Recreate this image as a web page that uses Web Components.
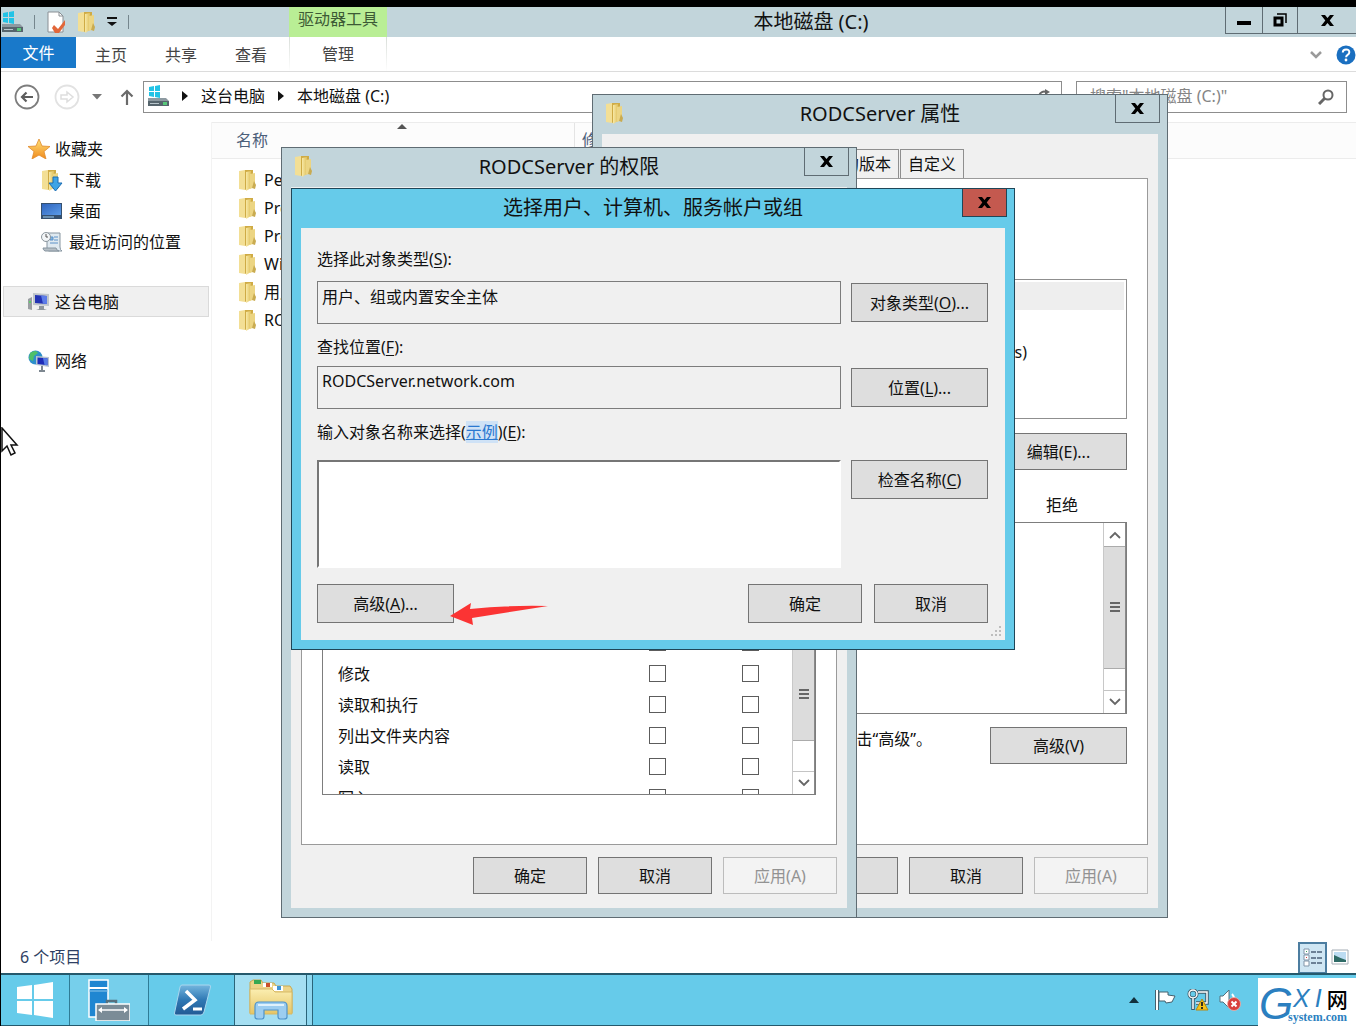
<!DOCTYPE html>
<html lang="zh-CN">
<head>
<meta charset="utf-8">
<title>本地磁盘 (C:)</title>
<style>
  html, body { margin: 0; }
  body {
    background: #000;
    font: 16px/24px "Noto Sans", "Open Sans", "Noto Sans CJK SC", sans-serif;
    color: #111;
    overflow: hidden;
  }
  server-desktop { min-height: 100vh; }
  properties-dialog { left: 592px; top: 94px; width: 576px; }
  permissions-dialog { left: 281px; top: 147px; width: 576px; }
  select-dialog { left: 291px; top: 188px; width: 724px; }
</style>
</head>
<body>
<server-desktop>
  <explorer-window></explorer-window>
  <task-bar slot="bar"></task-bar>
  <properties-dialog slot="windows"></properties-dialog>
  <permissions-dialog slot="windows"></permissions-dialog>
  <select-dialog slot="windows"></select-dialog>
  <mouse-pointer slot="windows"></mouse-pointer>
  <site-mark slot="windows"></site-mark>
</server-desktop>

<script>
const svg = (w, h, body, vb) => `<svg width="${w}" height="${h}" viewBox="${vb || `0 0 ${w} ${h}`}" aria-hidden="true">${body}</svg>`;

const FOLDER = `
  <defs><linearGradient id="f" x1="0" x2="1"><stop offset="0" stop-color="#f8e9a6"/><stop offset="1" stop-color="#dfc05c"/></linearGradient></defs>
  <path d="M1 2l6-1v20l-6-1z" fill="#f3df95"/>
  <path d="M7 1h8v16l-8 4z" fill="#cfab45"/>
  <path d="M8 3l5-1v17l-5 3z" fill="url(#f)"/>
  <path d="M12 5l5-1v14l-5 2z" fill="#ecd583"/>
  <path d="M16 12l2 4-1 4-3-1z" fill="#c9ab50"/>`;
const DRIVE = `
  <g fill="#22c3e6"><path d="M2 2l5-1v5H2zM8 1l5-1v6H8zM2 7h5v5l-5-1zM8 7h5v6l-5-1z"/></g>
  <path d="M1 13h18l3 3v5H1z" fill="#8d9aa1"/><path d="M1 16h21v5H1z" fill="#56656d"/>
  <path d="M3 18h9v1H3z" fill="#b9c6cc"/><path d="M16 17h4v3h-4z" fill="#57c879"/>`;
const ICONS = {
  folder: svg(19, 22, FOLDER),
  drive: svg(22, 22, DRIVE),
  page: svg(20, 22, `<path d="M2 1h11l4 4v16H2z" fill="#fff" stroke="#8a8f94"/><path d="M13 1v4h4" fill="none" stroke="#8a8f94"/><path d="M8 14l4 4 7-9v5l-6 8H9l-3-5z" fill="#e2673a"/>`),
  qat: svg(10, 10, `<path d="M0 1h10" stroke="#111" stroke-width="2"/><path d="M0 5h10l-5 4z" fill="#111"/>`),
  min: svg(14, 14, `<path d="M0 8h14v4H0z" fill="#000"/>`),
  restore: svg(14, 14, `<path d="M4 1h9v9" fill="none" stroke="#000" stroke-width="1.500"/><path d="M2 5h7v7H2z" fill="none" stroke="#000" stroke-width="3"/>`),
  close: svg(13, 11, `<path d="M0 0h4l2.500 3L9 0h4L8.700 5.500 13 11H9L6.500 8 4 11H0l4.300-5.500z" fill="#000"/>`),
  help: svg(20, 20, `<circle cx="10" cy="10" r="9.500" fill="#1a6fc0"/><path d="M6.800 7.600q0-3.200 3.300-3.200t3.200 2.900q0 1.600-1.700 2.600-1.500.900-1.500 2.300" fill="none" stroke="#fff" stroke-width="2"/><circle cx="10" cy="15" r="1.400" fill="#fff"/>`),
  chevron: svg(12, 8, `<path d="M1 1l5 5 5-5" fill="none" stroke="#9a9a9a" stroke-width="2.500"/>`),
  back: svg(26, 26, `<circle cx="13" cy="13" r="11.500" fill="none" stroke="#7d7d7d" stroke-width="1.800"/><path d="M19 13H8M12.500 8.500L8 13l4.500 4.500" fill="none" stroke="#5d5d5d" stroke-width="2.200"/>`),
  forward: svg(26, 26, `<circle cx="13" cy="13" r="11.500" fill="none" stroke="#e2e2e2" stroke-width="1.800"/><path d="M7 11h6V8l6 5-6 5v-3H7z" fill="none" stroke="#dedede" stroke-width="1.500"/>`),
  caret: svg(10, 6, `<path d="M0 0h10L5 5.500z" fill="#777"/>`),
  up: svg(14, 16, `<path d="M7 16V2M1.500 7.500L7 2l5.500 5.500" fill="none" stroke="#6a6a6a" stroke-width="2.200"/>`),
  crumb: svg(6, 10, `<path d="M0 0l6 5-6 5z" fill="#111"/>`),
  refresh: svg(14, 14, `<path d="M12 8a5 5 0 1 1-3-5" fill="none" stroke="#666" stroke-width="2"/><path d="M8 0l5 3-5 3z" fill="#666"/>`),
  search: svg(16, 16, `<circle cx="10" cy="6" r="4.500" fill="none" stroke="#666" stroke-width="2"/><path d="M7 9l-6 6" stroke="#666" stroke-width="3"/>`),
  star: svg(22, 20, `<defs><linearGradient id="s" x2="0" y2="1"><stop stop-color="#ffe27a"/><stop offset="1" stop-color="#f08a1c"/></linearGradient></defs><path d="M11 0l3 7 8 .500-6 5 2 7.500-7-4-7 4 2-7.500-6-5L8 7z" fill="url(#s)" stroke="#e08a2c" stroke-width=".800"/>`),
  download: svg(22, 22, FOLDER + `<path d="M12 8h5v6h4l-6.500 8L8 14h4z" fill="#3ea4e6" stroke="#1b6db3"/>`),
  desk: svg(22, 18, `<defs><linearGradient id="d" x2="1" y2="1"><stop stop-color="#2f64bd"/><stop offset="1" stop-color="#5b9be8"/></linearGradient></defs><path d="M0 1h21v16H0z" fill="#35506f"/><path d="M1 2h19v11H1z" fill="url(#d)"/><path d="M2 15h11" stroke="#9fd0f5"/>`),
  recent: svg(22, 20, `<path d="M6 1h13v14q0 3 2 4H8q-2 0-2-3z" fill="#dfe9f0" stroke="#8795a0"/><path d="M9 5h3v3H9zM13 5h4M13 8h4M9 11h8" stroke="#5d92c8" fill="#7fb4e2"/><path d="M2 16h13q1 3 3 3H4q-2-1-2-3z" fill="#b5bec5" stroke="#8795a0"/><circle cx="5" cy="5" r="4.500" fill="#f2f5f7" stroke="#8b959c"/><path d="M5 2v3h2" fill="none" stroke="#555"/>`),
  pc: svg(22, 20, `<path d="M0 7l4-2v13l-4-1z" fill="#9a9ea2"/><path d="M1 9h2v2H1z" fill="#5fce6a"/><path d="M5 1l16 1v12L5 13z" fill="#bfc5cb"/><path d="M7 3l12 1v8L7 11z" fill="#2333b4"/><path d="M13 3.500l6 .500v8l-4-.300z" fill="#5d7ce8"/><path d="M11 14h5v3l3 1H8l3-1z" fill="#8f979d"/>`),
  net: svg(22, 22, `<circle cx="7.500" cy="7.500" r="7" fill="#2e8fcb"/><path d="M2 3q6-4 8 0l-4 3-1 5-4-2zM10 8l4-2v5z" fill="#4fc069"/><path d="M8 6l13 1v10L8 15z" fill="#b9c4d0"/><path d="M9.500 7.500l10 .800v7l-10-1.300z" fill="#1e2cb8"/><path d="M15 8l4.500.300v7l-3-.400z" fill="#567be6"/><path d="M14 16v4m-3 1h6" stroke="#7d8790" stroke-width="2"/>`),
  details: svg(20, 20, `<g fill="#fff" stroke="#8195a8"><path d="M1 1h5v5H1zM1 7h5v5H1zM1 13h5v5H1z"/></g><path d="M8 4h5M14 4h5M8 10h5M14 10h5M8 15h5M14 15h5" stroke="#4c6078" stroke-width="1.500"/><path d="M3 3h1v1H3z" fill="#3aa05a"/><path d="M3 9h1v1H3z" fill="#d04040"/>`),
  thumbs: svg(18, 16, `<path d="M1 1h16v14H1z" fill="#fff" stroke="#a4adb5"/><path d="M3 3h12v10H3z" fill="#bcdcf2"/><path d="M3 6q6 3 12 5v2H3z" fill="#2e6b66"/>`),
  start: svg(36, 36, `<path d="M0 5l15-2v14H0zM17 3l19-3v17H17zM0 19h15v14L0 31zM17 19h19v17l-19-3z" fill="#fff"/>`),
  server: svg(42, 42, `<path d="M1 1h19v37H1z" fill="#1f86d1" stroke="#fff" stroke-width="1.500"/><path d="M1 9h19" stroke="#fff" stroke-width="2"/><path d="M1 12h19" stroke="#8fc8ec"/><path d="M19 25v-3h9v3" fill="none" stroke="#56707e" stroke-width="2.500"/><path d="M8 25h34v17H8z" fill="#7b8c97" stroke="#fff" stroke-width="1.500"/><path d="M12 31h26" stroke="#fff" stroke-width="1.500"/><path d="M14 28v6l-4-3zM36 28v6l4-3z" fill="#fff"/>`),
  shell: svg(38, 32, `<defs><linearGradient id="p" x2="0" y2="1"><stop stop-color="#74b6de"/><stop offset=".5" stop-color="#2f78b4"/><stop offset="1" stop-color="#225a94"/></linearGradient></defs><path d="M9 1h27q2 0 1.500 2L31 28q-1 3-3 3H3q-2 0-1.500-2L7 3q.500-2 2-2z" fill="url(#p)" stroke="#a9d6ee"/><path d="M13 7l9 9-12 9" fill="none" stroke="#fff" stroke-width="3.500"/><path d="M20 25h9" stroke="#fff" stroke-width="3"/>`),
  files: svg(44, 42, `<defs><linearGradient id="e" x2="0" y2="1"><stop stop-color="#fbeeb1"/><stop offset="1" stop-color="#e6c565"/></linearGradient></defs><path d="M1 6V3l3-2h8l2 3h11l2 3h14l2 3v24H1z" fill="#ecd489" stroke="#c9a850"/><path d="M5 1h7v4H5z" fill="#35a852"/><path d="M14 4h9v4h-9z" fill="#fff"/><path d="M17 4h4v4h-4z" fill="#c9502b"/><path d="M24 7h10v5H24z" fill="#fff"/><path d="M28 7h4v4h-4z" fill="#3d94d6"/><path d="M1 10h22l3 3h17v22H1z" fill="url(#e)" stroke="#d7b964"/><path d="M6 38V27q0-4 4-4h24q4 0 4 4v11q0 2-3 2h-4q-2 0-2-3v-6H15v6q0 3-2 3H9q-3 0-3-2z" fill="#9ccdf0" stroke="#4f94cb" stroke-width="1.200"/><path d="M9 26h26" stroke="#dff1fc" stroke-width="2"/>`),
  trayup: svg(10, 6, `<path d="M0 6l5-6 5 6z" fill="#12303d"/>`),
  flag: svg(22, 22, `<path d="M2 1v20" stroke="#44606d" stroke-width="4"/><path d="M2 1v20" stroke="#fff" stroke-width="2"/><path d="M4 3h9v3l7 1-3 6-6 1-1-2H4z" fill="#fff" stroke="#44606d"/>`),
  traynet: svg(22, 22, `<circle cx="6" cy="5" r="4" fill="none" stroke="#3f5a68" stroke-width="3"/><circle cx="6" cy="5" r="4" fill="none" stroke="#fff" stroke-width="1.500"/><path d="M6 9v12M11 3h9v11H9" fill="none" stroke="#3f5a68" stroke-width="3.500"/><path d="M6 9v11M11 3h9v11H9" fill="none" stroke="#fff" stroke-width="1.500"/><path d="M15 10l6 11H9z" fill="#f5c21b" stroke="#b98a10"/><path d="M15 13v4M15 18v2" stroke="#222" stroke-width="1.800"/>`),
  sound: svg(22, 22, `<path d="M1 7h3l6-6v18l-6-6H1z" fill="#fff" stroke="#55707d"/><path d="M13 5q2 2 2 5" fill="none" stroke="#fff" stroke-width="2"/><circle cx="15" cy="15" r="6.500" fill="#d8403c" stroke="#f0b0a8" stroke-width=".800"/><path d="M12.500 12.500l5 5m0-5l-5 5" stroke="#fff" stroke-width="2"/>`),
  scrollup: svg(12, 8, `<path d="M1 7l5-5 5 5" fill="none" stroke="#666" stroke-width="1.800"/>`),
  scrolldown: svg(12, 8, `<path d="M1 1l5 5 5-5" fill="none" stroke="#666" stroke-width="1.800"/>`),
  sort: svg(10, 5, `<path d="M0 5l5-5 5 5z" fill="#555"/>`),
};

function define(name, css, html) {
  const template = document.createElement("template");
  template.innerHTML = `<style>*{box-sizing:border-box} button,input,textarea{font:inherit;color:inherit;margin:0} ${css}</style>${html}`;
  customElements.define(name, class extends HTMLElement {
    constructor() {
      super();
      this.attachShadow({ mode: "open" }).append(template.content.cloneNode(true));
    }
  });
}

customElements.define("win-icon", class extends HTMLElement {
  constructor() {
    super();
    this.attachShadow({ mode: "open" });
  }
  connectedCallback() {
    this.shadowRoot.innerHTML = `<style>:host{display:inline-flex;flex:none}svg{display:block}</style>${ICONS[this.getAttribute("name")] || ""}`;
  }
});

/* Grey push button */
customElements.define("push-button", class extends HTMLElement {
  constructor() {
    super();
    this.attachShadow({ mode: "open" }).innerHTML = `
      <style>
        :host { display: block; flex: none; width: 114px; height: 37px; }
        :host([wide]) { width: 137px; }
        :host([tall]) { height: 39px; }
        button { box-sizing: border-box; width: 100%; height: 100%; padding: 0; margin: 0; border: 1px solid #747474;
          background: #dedede; font: inherit; color: inherit; }
        button:disabled { background: #f3f3f3; border-color: #bcbcbc; color: #929292; }
      </style>
      <button type="button"><slot></slot></button>`;
  }
  connectedCallback() {
    this.shadowRoot.querySelector("button").disabled = this.hasAttribute("disabled");
  }
});

define("scroll-bar", `
  :host { display: flex; flex-direction: column; flex: none; width: 23px; border-left: 1px solid #c8c8c8; border-right: 1px solid #8a8a8a; background: #fff; }
  button { height: 23px; padding: 0; border: 0; background: #fff; display: flex; align-items: center; justify-content: center; }
  button:last-child { border-top: 1px solid #c4c4c4; margin-top: auto; }
  .lead { height: var(--lead, 0px); }
  .thumb { height: var(--thumb, 100px); background: #dcdcdc; border: 1px solid #ababab; border-width: 1px 0; display: flex; align-items: center; justify-content: center; }
  .grip { width: 10px; height: 11px; background: repeating-linear-gradient(#666 0 2px, #dcdcdc 2px 4px); }
`, `<button type="button" aria-label="向上"><win-icon name="scrollup"></win-icon></button><div class="lead"></div>
  <div class="thumb"><div class="grip"></div></div>
  <button type="button" aria-label="向下"><win-icon name="scrolldown"></win-icon></button>`);

/* Window chrome shared by the three dialogs */
define("dialog-frame", `
  :host { display: block; border: 1px solid var(--edge, #5f6c73); background: var(--chrome, #c2d5db); }
  header { display: grid; grid-template-columns: 52px 1fr 52px; height: 39px; }
  .icon { padding: 7px 0 0 12px; }
  h2 { margin: 0; font: inherit; font-size: 20px; line-height: 38px; text-align: center; white-space: nowrap; }
  .close { justify-self: end; width: 45px; height: 28px; margin-right: 7px; padding: 0; border: 1px solid var(--edge, #5f6c73); border-top: 0;
    background: var(--close, transparent); display: flex; align-items: center; justify-content: center; }
  .client { margin: 0 9px 9px; background: #f0f0f0; }
`, `<header><div class="icon"><slot name="icon"></slot></div><h2><slot name="title"></slot></h2>
    <button class="close" type="button" aria-label="关闭"><win-icon name="close"></win-icon></button></header>
  <div class="client"><slot></slot></div>`);

define("server-desktop", `
  :host { display: flex; flex-direction: column; position: relative; padding: 7px 0 0 1px; overflow: hidden; box-sizing: border-box; }
  ::slotted(explorer-window) { flex: 1; }
`, `<slot></slot><slot name="bar"></slot><slot name="windows"></slot>`);

define("explorer-window", `
  :host { display: flex; flex-direction: column; background: #fff; }
  .title { display: grid; grid-template-columns: 288px 98px 1fr 131px; height: 30px; background: #c2d5db; }
  .quick { display: flex; align-items: center; gap: 11px; overflow: hidden; }
  .quick i { width: 1px; height: 14px; background: #75868d; }
  .tool { background: #b9ee95; text-align: center; color: #3d5a35; line-height: 25px; margin: 0; }
  h1 { margin: 0; font: inherit; font-size: 20px; line-height: 30px; text-align: center; padding-left: 10px; white-space: nowrap; }
  .controls { display: grid; grid-template-columns: 37px 35px 59px; height: 27px; }
  .controls button { border: 1px solid #5f6c73; border-width: 0 0 1px 1px; background: none; padding: 0; display: flex; align-items: center; justify-content: center; }
  .ribbon { display: flex; height: 35px; border-bottom: 1px solid #dcdcdc; align-items: flex-start; }
  .ribbon button { border: 0; background: none; width: 70px; height: 36px; padding: 0; color: #444; }
  .ribbon .file { width: 75px; height: 31px; background: #1979ca; color: #fff; }
  .ribbon .manage { margin-left: 3px; width: 98px; height: 34px; border: 1px solid; border-width: 0 1px; border-image: linear-gradient(#d8ddd8, #fff) 1; }
  .ribbon .end { margin-left: auto; display: flex; align-items: center; gap: 14px; height: 36px; }
  .ribbon .end button { width: auto; display: flex; align-items: center; }
  .address { display: grid; grid-template-columns: 128px 1fr 271px; column-gap: 14px; padding: 9px 9px 9px 0; height: 50px; }
  .moves { display: flex; align-items: center; gap: 14px; padding-left: 13px; }
  .moves button { border: 0; background: none; padding: 0; display: flex; }
  .moves button:nth-child(3) { margin-left: -2px; }
  .moves button:nth-child(4) { margin-left: 4px; }
  .path { display: flex; align-items: center; gap: 13px; border: 1px solid #8d8d8d; padding: 0 10px 2px 3px; height: 32px; white-space: nowrap; }
  .path .go { margin-left: auto; border: 0; background: none; padding: 0; display: flex; }
  .path a { color: inherit; text-decoration: none; }
  .find { display: flex; align-items: center; border: 1px solid #8d8d8d; height: 32px; padding-right: 12px; }
  .find input { flex: 1; min-width: 0; border: 0; background: none; padding: 0 0 2px 13px; outline: 0; height: 30px; }
  .find input::placeholder { color: #858585; opacity: 1; }
  .body { display: grid; grid-template-columns: 211px 1fr; flex: 1; }
  nav { padding: 12px 2px 0; border-right: 1px solid #f3f3f3; }
  nav a { display: flex; align-items: center; gap: 5px; height: 31px; padding-left: 24px; color: inherit; text-decoration: none; white-space: nowrap; border: 1px solid transparent; }
  nav a.sub { padding-left: 37px; gap: 6px; }
  nav a.top { height: 30px; }
  nav a.apart { margin-top: 29px; }
  nav a.here { background: #f0f0f0; border-color: #dadada; }
  .head { display: grid; grid-template-columns: 363px 1fr; border: 1px solid #ececec; border-width: 1px 0; height: 37px; background: #fcfcfc; color: #4c607a; }
  .head div { position: relative; line-height: 34px; padding-left: 24px; border-right: 1px solid #e4e4e4; }
  .head div + div { padding-left: 7px; border: 0; }
  .head win-icon { position: absolute; left: 185px; top: 1px; }
  ul { list-style: none; margin: 0; padding: 7px 0 0 26px; }
  li { display: flex; align-items: center; gap: 7px; height: 28px; }
  footer { display: flex; align-items: center; height: 32px; padding: 0 7px 0 19px; color: #2f3f63; gap: 4px; }
  footer span { margin-right: auto; }
  footer button { border: 0; background: none; padding: 0; display: flex; align-items: center; justify-content: center; height: 31px; }
  footer .on { width: 29px; background: #cfe6f3; border: 2px solid #4c7da0; border-bottom-width: 1px; }
`, `
  <div class="title">
    <div class="quick"><win-icon name="drive"></win-icon><i></i><win-icon name="page"></win-icon><win-icon name="folder"></win-icon><win-icon name="qat"></win-icon><i></i></div>
    <p class="tool">驱动器工具</p>
    <h1>本地磁盘 (C:)</h1>
    <div class="controls">
      <button type="button" aria-label="最小化"><win-icon name="min"></win-icon></button>
      <button type="button" aria-label="还原"><win-icon name="restore"></win-icon></button>
      <button type="button" aria-label="关闭"><win-icon name="close"></win-icon></button>
    </div>
  </div>
  <div class="ribbon">
    <button type="button" class="file">文件</button><button type="button">主页</button><button type="button">共享</button><button type="button">查看</button><button type="button" class="manage">管理</button>
    <div class="end"><button type="button" aria-label="展开功能区"><win-icon name="chevron"></win-icon></button><button type="button" aria-label="帮助"><win-icon name="help"></win-icon></button></div>
  </div>
  <div class="address">
    <div class="moves">
      <button type="button" aria-label="后退"><win-icon name="back"></win-icon></button>
      <button type="button" aria-label="前进"><win-icon name="forward"></win-icon></button>
      <button type="button" aria-label="最近位置"><win-icon name="caret"></win-icon></button>
      <button type="button" aria-label="上移"><win-icon name="up"></win-icon></button>
    </div>
    <div class="path"><win-icon name="drive"></win-icon><win-icon name="crumb"></win-icon><a href="#pc">这台电脑</a><win-icon name="crumb"></win-icon><a href="#c">本地磁盘 (C:)</a>
      <button class="go" type="button" aria-label="刷新"><win-icon name="refresh"></win-icon></button></div>
    <div class="find"><input type="text" aria-label="搜索" placeholder="搜索&quot;本地磁盘 (C:)&quot;"><win-icon name="search"></win-icon></div>
  </div>
  <div class="body">
    <nav>
      <a class="top" href="#fav"><win-icon name="star"></win-icon>收藏夹</a>
      <a class="sub" href="#down"><win-icon name="download"></win-icon>下载</a>
      <a class="sub" href="#desk"><win-icon name="desk"></win-icon>桌面</a>
      <a class="sub" href="#recent"><win-icon name="recent"></win-icon>最近访问的位置</a>
      <a class="apart here" href="#pc"><win-icon name="pc"></win-icon>这台电脑</a>
      <a class="apart top" href="#net"><win-icon name="net"></win-icon>网络</a>
    </nav>
    <div>
      <div class="head"><div>名称<win-icon name="sort"></win-icon></div><div>修改日期</div></div>
      <ul>
        <li><win-icon name="folder"></win-icon>PerfLogs</li>
        <li><win-icon name="folder"></win-icon>Program Files</li>
        <li><win-icon name="folder"></win-icon>Program Files (x86)</li>
        <li><win-icon name="folder"></win-icon>Windows</li>
        <li><win-icon name="folder"></win-icon>用户</li>
        <li><win-icon name="folder"></win-icon>RODCServer</li>
      </ul>
    </div>
  </div>
  <footer><span>6 个项目</span>
    <button class="on" type="button" aria-label="详细信息"><win-icon name="details"></win-icon></button>
    <button type="button" aria-label="缩略图"><win-icon name="thumbs"></win-icon></button>
  </footer>`);

define("properties-dialog", `
  :host { display: block; position: absolute; }
  .client { padding: 15px 10px 14px; }
  .tabs { display: flex; justify-content: flex-end; padding-right: 184px; }
  .tabs button { height: 29px; padding: 0 7px; border: 1px solid #8f8f8f; border-bottom: 0; background: #f0f0f0; }
  .tabs button + button { margin-left: 1px; }
  .panel { border: 1px solid #9a9a9a; background: #fff; padding: 100px 20px 80px; }
  .names { border: 1px solid #8f8f8f; height: 140px; padding: 2px; margin: 0; list-style: none; text-align: right; }
  .names li { height: 28px; line-height: 28px; padding-right: 97px; }
  .names li:first-child { background: #eee; }
  .edit { display: flex; justify-content: flex-end; padding-top: 14px; }
  .deny { text-align: right; padding: 23px 49px 5px 0; }
  .list { border: 1px solid #7d7d7d; height: 192px; display: flex; justify-content: flex-end; }
  scroll-bar { --thumb: 123px; }
  .more { display: flex; justify-content: flex-end; gap: 58px; padding-top: 13px; white-space: nowrap; }
  footer { display: flex; justify-content: flex-end; gap: 11px; padding-top: 12px; }
`, `<dialog-frame>
  <win-icon slot="icon" name="folder"></win-icon><span slot="title">RODCServer 属性</span>
  <div class="client">
    <div class="tabs"><button type="button">以前的版本</button><button type="button">自定义</button></div>
    <div class="panel">
      <ul class="names"><li></li><li></li><li>Users (RODCSERVER\\Users)</li></ul>
      <div class="edit"><push-button wide>编辑(E)...</push-button></div>
      <div class="deny">拒绝</div>
      <div class="list"><scroll-bar></scroll-bar></div>
      <div class="more"><span>单击“高级”。</span><push-button wide>高级(V)</push-button></div>
    </div>
    <footer><push-button></push-button><push-button>取消</push-button><push-button disabled>应用(A)</push-button></footer>
  </div></dialog-frame>`);

const rights = ["修改", "读取和执行", "列出文件夹内容", "读取", "写入"];
define("permissions-dialog", `
  :host { display: block; position: absolute; }
  .client { padding: 15px 10px 14px; }
  .panel { border: 1px solid #9a9a9a; background: #fff; padding: 397px 20px 49px; }
  .list { display: flex; border: 1px solid #7d7d7d; height: 195px; overflow: hidden; }
  .rows { flex: 1; padding-top: 26px; }
  .row { display: grid; grid-template-columns: 1fr 17px 17px; column-gap: 76px; align-items: center; height: 31px; padding: 0 33px 0 15px; }
  input { appearance: none; width: 17px; height: 17px; border: 1px solid #5c5c5c; background: #fff; }
  scroll-bar { --lead: 23px; --thumb: 94px; }
  footer { display: flex; justify-content: flex-end; gap: 11px; padding-top: 12px; }
`, `<dialog-frame>
  <win-icon slot="icon" name="folder"></win-icon><span slot="title">RODCServer 的权限</span>
  <div class="client">
    <div class="panel"><div class="list">
      <div class="rows"><div class="row"><span></span><input type="checkbox" aria-label="允许 完全控制"><input type="checkbox" aria-label="拒绝 完全控制"></div>${rights.map((r, i) => `<div class="row"><label for="r${i}">${r}</label><input type="checkbox" id="r${i}"><input type="checkbox" aria-label="拒绝 ${r}"></div>`).join("")}</div>
      <scroll-bar></scroll-bar></div></div>
    <footer><push-button>确定</push-button><push-button>取消</push-button><push-button disabled>应用(A)</push-button></footer>
  </div></dialog-frame>`);

define("select-dialog", `
  :host { display: block; position: absolute; --chrome: #66cbea; --edge: #1f4658; --close: #c4594f; }
  .client { position: relative; padding: 19px 17px 17px 16px; }
  .line { display: grid; grid-template-columns: 1fr 137px; column-gap: 10px; align-items: center; }
  .line.tall { align-items: start; }
  .cap { padding: 11px 0 7px; line-height: 24px; }
  .cap.first { padding: 0 0 10px; }
  .cap.last { padding-bottom: 16px; }
  .cap a { color: #2a78d0; background: #cfe2f6; }
  u { text-underline-offset: 2px; }
  input { width: 100%; height: 43px; border: 1px solid #7c7c7c; background: #f0f0f0; padding: 0 4px 13px; }
  textarea { display: block; width: 100%; height: 108px; border: 2px solid; border-color: #767676 #fff #fff #767676; background: #fff; resize: none; padding: 4px; }
  footer { display: flex; gap: 12px; padding-top: 16px; }
  footer push-button:first-child { margin-right: auto; }
  .arrow { position: absolute; left: 149px; top: 374px; }
  .grip { position: absolute; right: 3px; bottom: 3px; }
  svg { display: block; }
`, `<dialog-frame>
  <span slot="title">选择用户、计算机、服务帐户或组</span>
  <div class="client">
    <div class="cap first"><label for="kind">选择此对象类型(<u>S</u>):</label></div>
    <div class="line"><input id="kind" type="text" readonly value="用户、组或内置安全主体"><push-button wide tall>对象类型(<u>O</u>)...</push-button></div>
    <div class="cap"><label for="place">查找位置(<u>F</u>):</label></div>
    <div class="line"><input id="place" type="text" readonly value="RODCServer.network.com"><push-button wide tall>位置(<u>L</u>)...</push-button></div>
    <div class="cap last"><label for="names">输入对象名称来选择(</label><a href="#examples">示例</a><label for="names">)(<u>E</u>):</label></div>
    <div class="line tall"><textarea id="names"></textarea><push-button wide tall>检查名称(<u>C</u>)</push-button></div>
    <footer><push-button wide tall>高级(<u>A</u>)...</push-button><push-button tall>确定</push-button><push-button tall>取消</push-button></footer>
    <div class="arrow">${svg(98, 24, `<path d="M0 14L21 1l-1 6q38-4 78-3-38 6-76 12l1 7z" fill="#fb3434"/>`)}</div>
    <div class="grip">${svg(11, 11, `<path d="M8 0h2v2H8zM8 4h2v2H8zM8 8h2v2H8zM4 4h2v2H4zM4 8h2v2H4zM0 8h2v2H0z" fill="#bdbdbd"/>`)}</div>
  </div></dialog-frame>`);

define("mouse-pointer", `:host { position: absolute; left: 1px; top: 427px; } svg { display: block; }`,
  svg(18, 30, `<path d="M1 1v23l5-5 4 9 4-2-4-8h6z" fill="#fff" stroke="#111" stroke-width="1.500"/>`));

define("task-bar", `
  :host { display: flex; align-items: stretch; height: 53px; background: #66cbea; border: solid #25596c; border-width: 2px 0 1px; box-sizing: border-box; }
  button { border: 0; background: none; padding: 0; display: flex; align-items: center; justify-content: center; width: 85px; }
  .start { width: 68px; }
  .run { width: 80px; background: #76cfeb; border: 1px solid #2f7c96; border-width: 0 1px; }
  .open { width: 73px; background: #a5dff2; border: 1px solid #2a6479; border-width: 0 1px; }
  .stack { width: 6px; background: #8ed7ef; border-right: 1px solid #2a6479; }
  .tray { margin-left: auto; display: flex; align-items: center; gap: 10px; padding-right: 115px; }
  .tray button { width: 22px; }
`, `<button class="start" type="button" aria-label="开始"><win-icon name="start"></win-icon></button>
  <button class="run" type="button" aria-label="服务器管理器"><win-icon name="server"></win-icon></button>
  <button type="button" aria-label="PowerShell"><win-icon name="shell"></win-icon></button>
  <button class="open" type="button" aria-label="文件资源管理器"><win-icon name="files"></win-icon></button><div class="stack"></div>
  <div class="tray">
    <button type="button" aria-label="显示隐藏的图标"><win-icon name="trayup"></win-icon></button>
    <button type="button" aria-label="操作中心"><win-icon name="flag"></win-icon></button>
    <button type="button" aria-label="网络"><win-icon name="traynet"></win-icon></button>
    <button type="button" aria-label="音量"><win-icon name="sound"></win-icon></button>
  </div>`);

define("site-mark", `
  :host { position: absolute; right: 0; bottom: 0; width: 98px; height: 48px; background: #fff; display: flex; color: #2b7fc0; box-sizing: border-box; padding-left: 1px; }
  .g { font: italic 44px/52px "Liberation Sans Narrow", "Liberation Sans", sans-serif; width: 29px; }
  .rest { display: flex; flex-direction: column; padding-top: 7px; }
  .xi { display: flex; gap: 5px; font: italic 25px/26px "Liberation Sans", sans-serif; padding-left: 5px; }
  .xi b { font: 500 21px/26px "Noto Sans CJK SC", sans-serif; color: #000; }
  .dom { font: bold 12px/12px "Liberation Serif", serif; }
`, `<span class="g">G</span><span class="rest"><span class="xi"><span>X</span><span>I</span><b>网</b></span><span class="dom">system.com</span></span>`);
</script>
</body>
</html>
